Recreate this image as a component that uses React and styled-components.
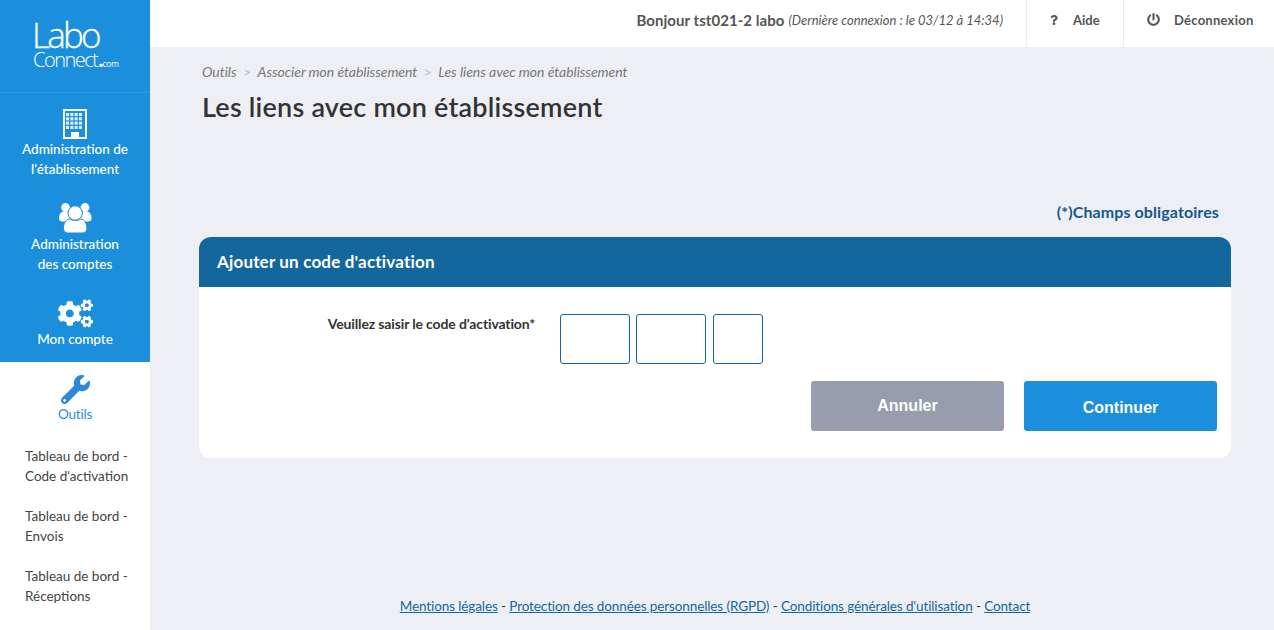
import React from 'react'
import styled, { createGlobalStyle } from 'styled-components'
import { FaCogs, FaWrench, FaQuestion, FaPowerOff } from 'react-icons/fa'

const GlobalStyle = createGlobalStyle`
  html, body {
    margin: 0;
    padding: 0;
    height: 100%;
    overflow: hidden;
    font-family: "Lato", "Open Sans", sans-serif;
  }
  * { box-sizing: border-box; }
`

const Page = styled.div`
  display: flex;
  width: 1274px;
  height: 630px;
  overflow: hidden;
  background: #eeeff4;
`

const Sidebar = styled.aside`
  display: flex;
  flex-direction: column;
  width: 150px;
  flex-shrink: 0;
  background: #fff;
`

const BluePanel = styled.div`
  background: #1b8fdc;
`

const LogoBox = styled.div`
  height: 93px;
  padding: 17px 0 0 32px;
  color: #fff;
  border-bottom: 1px solid #2a97df;
`

const LogoLabo = styled.div`
  font-family: "Open Sans", sans-serif;
  font-weight: 300;
  font-size: 35px;
  line-height: 36px;
  letter-spacing: -2.8px;
  -webkit-text-stroke: 0.3px #fff;
`

const LogoConnect = styled.div`
  display: flex;
  align-items: baseline;
  font-family: "Open Sans", sans-serif;
  font-weight: 300;
  font-size: 20px;
  line-height: 14px;
  letter-spacing: -1.5px;
  padding-left: 1px;
`

const LogoDot = styled.span`
  font-weight: 800;
  font-size: 17px;
  letter-spacing: -0.8px;
  margin-left: 1px;
`

const LogoCom = styled.span`
  font-size: 8.5px;
  font-weight: 400;
  letter-spacing: -0.4px;
`

const NavItem = styled.div`
  display: flex;
  flex-direction: column;
  align-items: center;
  padding: ${p => p.$top || 15}px 0 ${p => p.$pad}px;
  color: ${p => (p.$active ? '#2b8ad8' : '#fff')};
  font-size: 13.5px;
  font-weight: ${p => (p.$active ? 400 : 500)};
  letter-spacing: ${p => (p.$active ? '-0.2px' : '0')};
  line-height: 20px;
  text-align: center;
`

const NavIcon = styled.div`
  display: flex;
  align-items: center;
  justify-content: center;
  height: ${p => p.$h || 31}px;
`

const SubLink = styled.div`
  padding-left: 25px;
  margin-bottom: 20px;
  width: 140px;
  color: #444;
  font-size: 13.5px;
  line-height: 20px;
`

const SubList = styled.div`
  padding-top: 22px;
`

const Main = styled.main`
  display: flex;
  flex-direction: column;
  flex: 1;
  min-width: 0;
`

const TopBar = styled.header`
  display: flex;
  justify-content: flex-end;
  align-items: stretch;
  height: 47px;
  background: #fff;
`

const Greeting = styled.div`
  display: flex;
  align-items: center;
  gap: 4px;
  padding: 0 23px 8px 0;
  color: #555;
  font-size: 15px;
  font-weight: 700;
  letter-spacing: 0.05px;
`

const LastLogin = styled.em`
  color: #555;
  font-size: 13px;
  font-weight: 400;
  letter-spacing: 0;
`

const TopAction = styled.div`
  display: flex;
  align-items: center;
  width: ${p => p.$w}px;
  padding: 0 0 8px ${p => p.$left}px;
  gap: ${p => p.$gap}px;
  border-left: 1px solid #e8edf2;
  color: #555;
  font-size: 13px;
  font-weight: 700;
  letter-spacing: ${p => p.$ls || 0}px;
`

const Content = styled.div`
  display: flex;
  flex-direction: column;
  flex: 1;
  padding: 15px 43px 14px 49px;
`

const Breadcrumb = styled.nav`
  display: flex;
  gap: 6.5px;
  padding-left: 3px;
  color: #777;
  font-size: 14px;
  font-style: italic;
  line-height: 20px;
  letter-spacing: -0.04px;
`

const Sep = styled.span`
  color: #bbb;
  font-style: normal;
`

const Title = styled.h1`
  margin: 7px 0 0;
  padding-left: 3px;
  color: #333;
  font-size: 27px;
  font-weight: 600;
  line-height: 36px;
  letter-spacing: 0.22px;
`

const Required = styled.div`
  margin-top: 77px;
  padding-right: 12px;
  color: #14598a;
  font-size: 16px;
  font-weight: 700;
  line-height: 20px;
  letter-spacing: 0.1px;
  text-align: right;
`

const Card = styled.section`
  margin-top: 15px;
  height: 221px;
  background: #fff;
  border-radius: 12px;
  overflow: hidden;
`

const CardHeader = styled.h2`
  margin: 0;
  height: 50px;
  padding: 0 18px;
  background: #14679c;
  color: #fff;
  font-size: 17px;
  font-weight: 700;
  line-height: 50px;
  letter-spacing: 0.18px;
`

const FormRow = styled.div`
  display: flex;
  align-items: flex-start;
  padding-top: 27px;
`

const FieldLabel = styled.label`
  width: 336px;
  margin-right: 25px;
  color: #333;
  font-size: 14px;
  font-weight: 700;
  line-height: 20px;
  letter-spacing: -0.14px;
  text-align: right;
`

const CodeInputs = styled.div`
  display: flex;
  gap: 6px;
`

const CodeInput = styled.input`
  width: ${p => p.$w}px;
  height: 50px;
  margin-right: ${p => p.$extra || 0}px;
  border: 1px solid #14679c;
  border-radius: 3px;
  background: #fff;
`

const Actions = styled.div`
  display: flex;
  justify-content: flex-end;
  gap: 20px;
  padding-top: 17px;
  padding-right: 14px;
`

const ActionButton = styled.button`
  width: 193px;
  height: 50px;
  padding: ${p => p.$shift}px 0 0;
  border: 0;
  border-radius: 3px;
  background: ${p => p.$bg};
  color: #fff;
  font-family: "Liberation Sans", sans-serif;
  font-size: 16px;
  font-weight: 700;
`

const Footer = styled.footer`
  margin-top: auto;
  color: #333;
  font-size: 13.5px;
  line-height: 20px;
  letter-spacing: -0.11px;
  text-align: center;
`

const FooterLink = styled.a`
  color: #14679c;
  text-decoration: underline;
`

const BuildingIcon = () => {
  const cells = []
  for (let r = 0; r < 4; r++) {
    for (let c = 0; c < 4; c++) {
      cells.push(<rect key={r + '-' + c} x={3 + c * 4.3} y={4 + r * 4.3} width="3.1" height="3.1" fill="#fff" opacity="0.85" />)
    }
  }
  return (
    <svg width="24" height="30" viewBox="0 0 24 30">
      <rect x="1" y="1" width="22" height="28" fill="none" stroke="#fff" strokeWidth="2" />
      {cells}
      <rect x="8" y="23" width="8" height="6" fill="#fff" />
    </svg>
  )
}

const UsersIcon = () => (
  <svg width="33" height="31" viewBox="0 0 33 31">
    <circle cx="6.500" cy="4.500" r="4.400" fill="#fff" />
    <circle cx="26" cy="4.500" r="4.400" fill="#fff" />
    <path d="M0 15c0-4 2-6.500 5-6.500h22.500c3 0 5 2.500 5 6.500 0 2-1 3.500-3 3.500H3c-2 0-3-1.500-3-3.500z" fill="#fff" />
    <circle cx="16.200" cy="10" r="7.200" fill="#fff" stroke="#1b8fdc" strokeWidth="1" />
    <path d="M4.500 25c0-5 2.500-8.500 6-9 1.500 1 3.500 1.500 5.700 1.500s4.200-.5 5.700-1.500c3.500.5 6 4 6 9 0 3-1.500 5-4 5H8.500c-2.500 0-4-2-4-5z" fill="#fff" stroke="#1b8fdc" strokeWidth="1" />
  </svg>
)

export default function App() {
  return (
    <Page>
      <GlobalStyle />
      <Sidebar>
        <BluePanel>
          <LogoBox>
            <LogoLabo>Labo</LogoLabo>
            <LogoConnect>Connect<LogoDot>.</LogoDot><LogoCom>com</LogoCom></LogoConnect>
          </LogoBox>
          <NavItem $pad={9}>
            <NavIcon><BuildingIcon /></NavIcon>
            Administration de<br />l'établissement
          </NavItem>
          <NavItem $pad={9}>
            <NavIcon><UsersIcon /></NavIcon>
            Administration<br />des comptes
          </NavItem>
          <NavItem $pad={13}>
            <NavIcon><FaCogs size={35} /></NavIcon>
            Mon compte
          </NavItem>
        </BluePanel>
        <NavItem $active $top={13} $pad={0}>
          <NavIcon $h={29}><FaWrench size={29} /></NavIcon>
          Outils
        </NavItem>
        <SubList>
          <SubLink>Tableau de bord - Code d'activation</SubLink>
          <SubLink>Tableau de bord - Envois</SubLink>
          <SubLink>Tableau de bord - Réceptions</SubLink>
        </SubList>
      </Sidebar>
      <Main>
        <TopBar>
          <Greeting>
            Bonjour tst021-2 labo <LastLogin>(Dernière connexion : le 03/12 à 14:34)</LastLogin>
          </Greeting>
          <TopAction $w={97} $left={22} $gap={14}><FaQuestion size={10} />Aide</TopAction>
          <TopAction $w={151} $left={23} $gap={14} $ls={0.25}><FaPowerOff size={13} />Déconnexion</TopAction>
        </TopBar>
        <Content>
          <Breadcrumb>
            <span>Outils</span><Sep>&gt;</Sep>
            <span>Associer mon établissement</span><Sep>&gt;</Sep>
            <span>Les liens avec mon établissement</span>
          </Breadcrumb>
          <Title>Les liens avec mon établissement</Title>
          <Required>(*)Champs obligatoires</Required>
          <Card>
            <CardHeader>Ajouter un code d'activation</CardHeader>
            <FormRow>
              <FieldLabel>Veuillez saisir le code d'activation*</FieldLabel>
              <CodeInputs>
                <CodeInput $w={70} />
                <CodeInput $w={70} $extra={1} />
                <CodeInput $w={50} />
              </CodeInputs>
            </FormRow>
            <Actions>
              <ActionButton $bg="#989dad" $shift={0}>Annuler</ActionButton>
              <ActionButton $bg="#1b8fdc" $shift={4}>Continuer</ActionButton>
            </Actions>
          </Card>
          <Footer>
            <FooterLink>Mentions légales</FooterLink> - <FooterLink>Protection des données personnelles (RGPD)</FooterLink> - <FooterLink>Conditions générales d'utilisation</FooterLink> - <FooterLink>Contact</FooterLink>
          </Footer>
        </Content>
      </Main>
    </Page>
  )
}
